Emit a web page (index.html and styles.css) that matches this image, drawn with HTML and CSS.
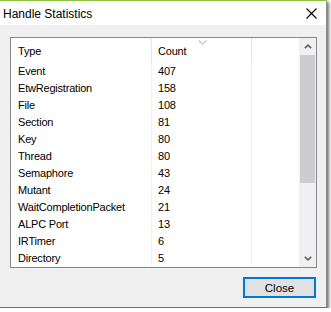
FILE: index.html
```html
<!DOCTYPE html>
<html lang="en">
<head>
  <meta charset="UTF-8" />
  <title>Handle Statistics</title>
  <link rel="stylesheet" href="styles.css">
</head>
<body>
  <div class="window">
    <div class="titlebar">
      <span class="title">Handle Statistics</span>
      <svg class="close-x" width="11" height="11" viewBox="0 0 11 11">
        <path d="M0.5 0.5 L10.5 10.5 M10.5 0.5 L0.5 10.5" stroke="#000" stroke-width="1.1" fill="none"/>
      </svg>
    </div>

    <div class="content">
      <div class="listview">
        <div class="grid">
          <div class="head">
            <div class="col col-type">Type</div>
            <div class="col col-count">Count
              <svg class="sort" width="9" height="5" viewBox="0 0 9 5">
                <path d="M0.5 0.5 L4.5 4 L8.5 0.5" stroke="#a0a0a0" fill="none"/>
              </svg>
            </div>
            <div class="col col-rest"></div>
          </div>
          <div class="rows" id="rows"></div>
        </div>
        <div class="scrollbar">
          <div class="arrow">
            <svg width="8" height="5" viewBox="0 0 8 5"><path d="M0.8 4.2 L4 1.2 L7.2 4.2" stroke="#606060" stroke-width="1.6" fill="none"/></svg>
          </div>
          <div class="track">
            <div class="thumb"></div>
          </div>
          <div class="arrow">
            <svg width="8" height="5" viewBox="0 0 8 5"><path d="M0.8 0.8 L4 3.8 L7.2 0.8" stroke="#606060" stroke-width="1.6" fill="none"/></svg>
          </div>
        </div>
      </div>

      <div class="footer">
        <button class="btn">Close</button>
      </div>
    </div>
  </div>

  <script>
    // handle counts, sorted by count
    const stats = [
      ['Event', 407],
      ['EtwRegistration', 158],
      ['File', 108],
      ['Section', 81],
      ['Key', 80],
      ['Thread', 80],
      ['Semaphore', 43],
      ['Mutant', 24],
      ['WaitCompletionPacket', 21],
      ['ALPC Port', 13],
      ['IRTimer', 6],
      ['Directory', 5]
    ];

    const rows = document.getElementById('rows');
    stats.forEach(([type, count]) => {
      const row = document.createElement('div');
      row.className = 'row';
      row.innerHTML = `<div class="col col-type">${type}</div>
        <div class="col col-count">${count}</div>
        <div class="col col-rest"></div>`;
      rows.appendChild(row);
    });
  </script>
</body>
</html>
```

FILE: styles.css
```css
:root {
  --accent: #8cc63f;
  --face: #f0f0f0;
  --frame: #828790;
  --grid-line: #e5e5e5;
  --body-line: #eef2f8;
  --thumb: #cdcdcd;
  --focus: #0078d7;
}

* {
  margin: 0;
  padding: 0;
  box-sizing: border-box;
}

body {
  font-family: "Liberation Sans", Arial, sans-serif;
  font-size: 11px;
  color: #000;
  background: #fff;
}

.window {
  width: 327px;
  height: 308px;
  background: var(--face);
  border-top: 1px solid var(--accent);
  border-right: 1px solid #8a8a8a;
  border-bottom: 1px solid #6e6e6e;
  box-shadow: 2px 2px 3px rgba(0, 0, 0, 0.55);
  display: flex;
  flex-direction: column;
}

.titlebar {
  height: 24px;
  background: #fff;
  display: flex;
  align-items: center;
  justify-content: space-between;
  padding: 0 9px 0 3px;
}

.title {
  font-size: 12px;
  padding-top: 1px;
}

.close-x {
  margin-top: 1px;
}

.content {
  padding: 12px 9px 0 10px;
}

.listview {
  width: 307px;
  height: 231px;
  border: 1px solid var(--frame);
  background: #fff;
  display: flex;
}

.grid {
  flex: 1;
  letter-spacing: -0.2px;
}

.head {
  height: 25px;
  display: flex;
}

.head .col {
  border-right: 1px solid var(--grid-line);
  padding-top: 7px;
  position: relative;
}

.row {
  height: 17px;
  line-height: 17px;
  display: flex;
}

.row .col {
  border-right: 1px solid var(--body-line);
}

.col-type {
  width: 141px;
  padding-left: 7px;
}

.col-count {
  width: 100px;
  padding-left: 6px;
}

.col-rest {
  flex: 1;
}

.col.col-rest {
  border-right: none;
}

.sort {
  position: absolute;
  top: 2px;
  left: 46px;
}

.scrollbar {
  width: 17px;
  background: var(--face);
  display: flex;
  flex-direction: column;
}

.arrow {
  height: 17px;
  display: flex;
  align-items: center;
  justify-content: center;
}

.track {
  flex: 1;
}

.thumb {
  height: 128px;
  margin: 0 1px;
  background: var(--thumb);
}

.footer {
  display: flex;
  justify-content: flex-end;
  padding-top: 9px;
}

.btn {
  width: 73px;
  height: 21px;
  font-family: inherit;
  font-size: 11.5px;
  background: #e1e1e1;
  border: 2px solid var(--focus);
  color: #000;
  margin-right: 1px;
}
```
